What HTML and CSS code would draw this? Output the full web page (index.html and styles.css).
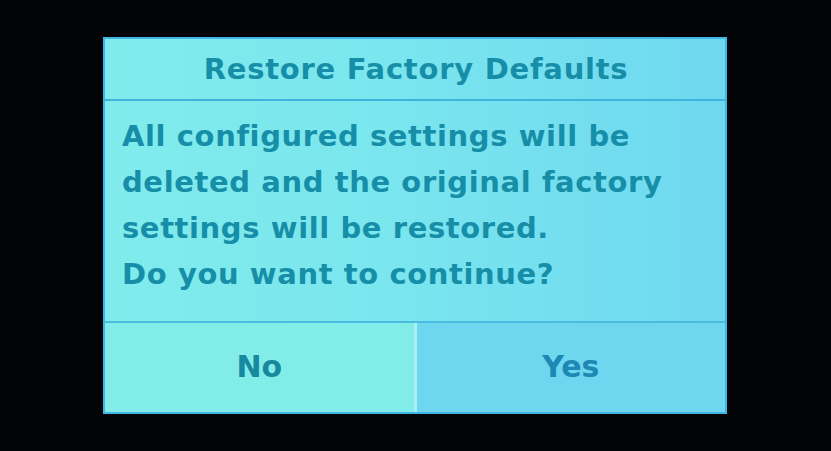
FILE: index.html
```html
<!DOCTYPE html>
<html>
<head>
<meta charset="utf-8">
<link rel="stylesheet" href="styles.css">
</head>
<body>
<div class="screen">
  <div class="dialog">
    <div class="title">Restore Factory Defaults</div>
    <div class="message">
      <div>All configured settings will be</div>
      <div>deleted and the original factory</div>
      <div>settings will be restored.</div>
      <div>Do you want to continue?</div>
    </div>
    <div class="buttons">
      <div class="btn btn-no">No</div>
      <div class="btn btn-yes">Yes</div>
    </div>
  </div>
</div>
</body>
</html>
```
FILE: styles.css
```css
html, body {
  margin: 0;
  padding: 0;
  background: #030405;
  width: 831px;
  height: 451px;
  overflow: hidden;
}
.screen {
  width: 831px;
  height: 451px;
  padding: 37px 0 0 103px;
  box-sizing: border-box;
}
.dialog {
  width: 624px;
  height: 377px;
  box-sizing: border-box;
  border: 2px solid #3fb6e6;
  background: linear-gradient(90deg, #80ecec 0%, #7ae6ee 45%, #6fd8f0 100%);
  display: flex;
  flex-direction: column;
  font-family: "DejaVu Sans", Verdana, sans-serif;
  font-weight: bold;
  color: #178ea8;
}
.title {
  height: 62px;
  border-bottom: 2px solid #3eb4dc;
  display: flex;
  align-items: center;
  justify-content: center;
  font-size: 29px;
  letter-spacing: 0.75px;
  padding-left: 2px;
  box-sizing: border-box;
}
.message {
  flex: 1;
  padding: 12px 0 0 17px;
  font-size: 29px;
  line-height: 46px;
  letter-spacing: 0.6px;
}
.buttons {
  height: 89px;
  border-top: 2px solid #48bde0;
  display: flex;
}
.btn {
  flex: 1;
  display: flex;
  align-items: center;
  justify-content: center;
  font-size: 30px;
  padding-bottom: 2px;
}
.btn-no {
  background: #82ece8;
  border-right: 3px solid #a6f2f0;
  color: #17889e;
}
.btn-yes {
  background: #6fd6ef;
  color: #1e88b4;
}
```
